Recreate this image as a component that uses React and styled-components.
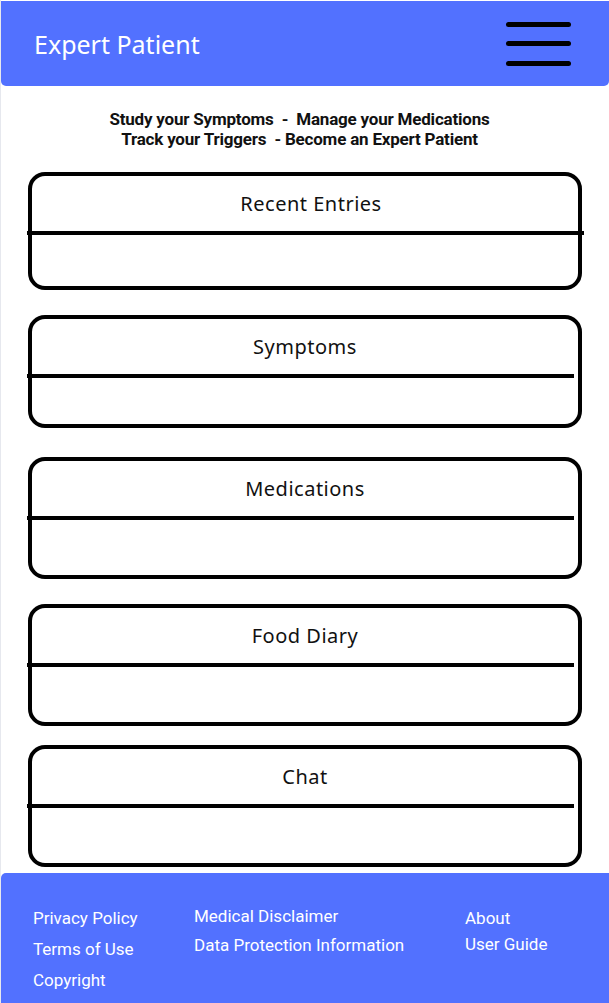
import styled, { createGlobalStyle } from "styled-components";

const GlobalStyle = createGlobalStyle`
  html, body {
    margin: 0;
    padding: 0;
    background: #e6e8ee;
  }
  body {
    font-family: "Noto Sans", "Open Sans", sans-serif;
  }
`;

const cards = [
  { title: "Recent Entries", body: 51, gap: 0, full: true },
  { title: "Symptoms", body: 46, gap: 25 },
  { title: "Medications", body: 55, gap: 29 },
  { title: "Food Diary", body: 55, gap: 25 },
  { title: "Chat", body: 55, gap: 19 },
];

const App = () => {
  return (
    <Page>
      <GlobalStyle />
      <Header>
        <Brand>Expert Patient</Brand>
        <Burger aria-label="menu">
          <span />
          <span />
          <span />
        </Burger>
      </Header>

      <Tagline>
        <p>Study your Symptoms&nbsp; -&nbsp; Manage your Medications</p>
        <p>Track your Triggers&nbsp; - Become an Expert Patient</p>
      </Tagline>

      <CardList>
        {cards.map((c) => (
          <Card key={c.title} $gap={c.gap}>
            <CardTitle $shift={c.full ? 6 : 0}>{c.title}</CardTitle>
            <Divider $full={c.full} />
            <CardBody $h={c.body} />
          </Card>
        ))}
      </CardList>

      <Footer>
        <FooterCol $gap={9}>
          <FooterLink>Privacy Policy</FooterLink>
          <FooterLink>Terms of Use</FooterLink>
          <FooterLink>Copyright</FooterLink>
        </FooterCol>
        <FooterCol $gap={7} $top={-2}>
          <FooterLink>Medical Disclaimer</FooterLink>
          <FooterLink>Data Protection Information</FooterLink>
        </FooterCol>
        <FooterCol $gap={4}>
          <FooterLink>About</FooterLink>
          <FooterLink>User Guide</FooterLink>
        </FooterCol>
      </Footer>
    </Page>
  );
};

const Page = styled.div`
  margin-left: 1px;
  padding-top: 1px;
  background: #ffffff;
  min-height: 1002px;
  display: flex;
  flex-direction: column;
`;

const Header = styled.header`
  height: 85px;
  background: #5271ff;
  border-radius: 0 0 5px 5px;
  display: flex;
  align-items: center;
  justify-content: space-between;
  padding: 0 38px 0 33px;
`;

const Brand = styled.h1`
  margin: 0;
  color: #ffffff;
  font-size: 25px;
  font-weight: 400;
  letter-spacing: 0;
`;

const Burger = styled.div`
  width: 65px;
  display: flex;
  flex-direction: column;
  gap: 14.5px;

  span {
    display: block;
    height: 5px;
    border-radius: 3px;
    background: #000000;
  }
`;

const Tagline = styled.div`
  margin: 23px 0 0;
  padding-right: 11px;
  text-align: center;
  font-family: Roboto, "Noto Sans", sans-serif;
  font-weight: 700;
  font-size: 17px;
  line-height: 20px;
  color: #111111;
  letter-spacing: -0.2px;

  p {
    margin: 0;
  }
`;

const CardList = styled.main`
  margin-top: 23px;
  padding: 0 27px;
  display: flex;
  flex-direction: column;
`;

const Card = styled.section`
  margin-top: ${({ $gap }) => $gap}px;
  border: 4.5px solid #000000;
  border-radius: 17px;
  display: flex;
  flex-direction: column;
`;

const CardTitle = styled.h2`
  margin: 0;
  height: 55px;
  display: flex;
  align-items: center;
  justify-content: center;
  padding: 0 0 0 ${({ $shift }) => $shift * 2}px;
  box-sizing: border-box;
  font-size: 20px;
  font-weight: 400;
  letter-spacing: 0.5px;
  color: #111111;
`;

const Divider = styled.div`
  height: 4px;
  background: #000000;
  margin-left: -5.5px;
  margin-right: ${({ $full }) => ($full ? "-5.5px" : "4px")};
`;

const CardBody = styled.div`
  height: ${({ $h }) => $h}px;
`;

const Footer = styled.footer`
  margin-top: 6px;
  flex: 1;
  background: #5271ff;
  border-radius: 5px 0 0 0;
  display: grid;
  grid-template-columns: 161px 271px 1fr;
  align-items: start;
  padding: 34px 0 0 32px;
`;

const FooterCol = styled.div`
  display: flex;
  flex-direction: column;
  gap: ${({ $gap }) => $gap}px;
  margin-top: ${({ $top = 0 }) => $top}px;
`;

const FooterLink = styled.a`
  color: #ffffff;
  font-family: Roboto, "Noto Sans", sans-serif;
  font-size: 17px;
  line-height: 22px;
  cursor: pointer;
`;

export default App;
